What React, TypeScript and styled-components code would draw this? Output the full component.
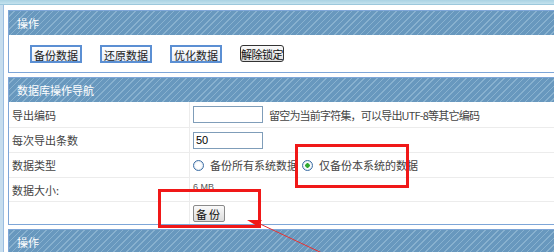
import * as React from 'react'
import styled, { createGlobalStyle } from 'styled-components'

const GlobalStyle = createGlobalStyle`
  html, body {
    margin: 0;
    padding: 0;
    background: #fff;
    overflow: hidden;
  }
  body {
    font-family: "Noto Sans CJK SC", "Liberation Sans", sans-serif;
    font-size: 11px;
    color: #333;
  }
`

const theme = {
  border: '#7ea6d8',
  headBase: '#6898be',
  headStripe: '#88b1cf',
  rowLine: '#ececec',
  red: '#f01818'
}

const Page = styled.div`
  position: relative;
  width: 554px;
  height: 252px;
  overflow: hidden;
`

const TopBand = styled.div`
  height: 4px;
  background: linear-gradient(#a9d2e3, #c4e2ee);
  border-bottom: 1px solid #9cc8dc;
`

const Body = styled.div`
  display: flex;
  gap: 4px;
`

const SideEdge = styled.div`
  flex-shrink: 0;
  width: 3px;
  height: 260px;
  background: #c6ddee;
  border-right: 1px solid #9bbde0;
`

const Content = styled.div`
  flex-shrink: 0;
  width: 560px;
  padding-top: 5px;
  display: flex;
  flex-direction: column;
  gap: 4px;
`

const Panel = styled.div`
  border: 1px solid ${theme.border};
  background: #fff;
`

const PanelHead = styled.div`
  height: 24px;
  line-height: 24px;
  padding-left: 8px;
  color: #fff;
  background: repeating-linear-gradient(
    135deg,
    ${theme.headBase} 0 3.5px,
    ${theme.headStripe} 3.5px 4.5px
  );
`

const ButtonBar = styled.div`
  height: 37px;
  display: flex;
  align-items: center;
  gap: 18px;
  padding-left: 21px;
`

const ActionButton = styled.button`
  width: 52px;
  height: 18px;
  padding: 0;
  font: inherit;
  color: #222;
  background: linear-gradient(#ffffff, #e4ecf7);
  border: 2px solid #5b8fd3;
  cursor: pointer;
`

const PlainButton = styled.button<{ $wide?: boolean }>`
  height: 17px;
  padding: 0 ${p => (p.$wide ? '0' : '2px')};
  font: inherit;
  color: #111;
  background: linear-gradient(#fafafa, #dcdcdc);
  border: 1px solid ${p => (p.$wide ? '#333' : '#8a8a8a')};
  border-radius: ${p => (p.$wide ? '3px' : '2px')};
  letter-spacing: ${p => (p.$wide ? '-0.5px' : '2px')};
  cursor: pointer;
`

const Row = styled.div<{ $h: number; $last?: boolean }>`
  display: grid;
  grid-template-columns: 180px 1fr;
  height: ${p => p.$h}px;
  border-bottom: ${p => (p.$last ? 'none' : `1px solid ${theme.rowLine}`)};
`

const Label = styled.div`
  display: flex;
  align-items: center;
  padding-left: 3px;
  color: #444;
`

const Value = styled.div`
  display: flex;
  align-items: center;
  gap: 4px;
  padding-left: 3px;
  border-left: 1px solid ${theme.rowLine};
`

const TextBox = styled.input`
  flex-shrink: 0;
  width: 70px;
  height: 17px;
  box-sizing: border-box;
  padding: 0 2px;
  margin-right: 2px;
  font: 11px "Liberation Sans", sans-serif;
  color: #000;
  border: 1px solid #7f9db9;
  outline: none;
`

const Hint = styled.span`
  color: #444;
  letter-spacing: -0.8px;
  white-space: nowrap;
`

const RadioItem = styled.label`
  display: flex;
  align-items: center;
  gap: 6px;
  color: #444;
  white-space: nowrap;
`

const RadioDot = styled.span<{ $on?: boolean }>`
  flex-shrink: 0;
  width: 9px;
  height: 9px;
  border-radius: 50%;
  border: 1px solid #3c6ea5;
  background: radial-gradient(
    circle,
    ${p => (p.$on ? '#2fa82f 0 2px, #fff 2.5px' : '#fff 0, #fff 100%')}
  );
  box-shadow: inset 0 0 2px #b9c9da;
`

const SizeText = styled.span`
  font: 9px "Liberation Sans", sans-serif;
  color: #555;
  margin-top: -5px;
`

const Overlay = styled.svg`
  position: absolute;
  left: 0;
  top: 0;
  pointer-events: none;
`

export default function App() {
  return (
    <Page>
      <GlobalStyle />
      <TopBand />
      <Body>
        <SideEdge />
        <Content>
          <Panel>
            <PanelHead>操作</PanelHead>
            <ButtonBar>
              {['备份数据', '还原数据', '优化数据'].map(t => (
                <ActionButton key={t}>{t}</ActionButton>
              ))}
              <PlainButton $wide>解除锁定</PlainButton>
            </ButtonBar>
          </Panel>

          <Panel>
            <PanelHead>数据库操作导航</PanelHead>
            <Row $h={25}>
              <Label>导出编码</Label>
              <Value>
                <TextBox defaultValue="" />
                <Hint>留空为当前字符集，可以导出UTF-8等其它编码</Hint>
              </Value>
            </Row>
            <Row $h={24}>
              <Label>每次导出条数</Label>
              <Value>
                <TextBox defaultValue="50" />
              </Value>
            </Row>
            <Row $h={24}>
              <Label>数据类型</Label>
              <Value>
                <RadioItem>
                  <RadioDot />
                  备份所有系统数据
                </RadioItem>
                <RadioItem>
                  <RadioDot $on />
                  仅备份本系统的数据
                </RadioItem>
              </Value>
            </Row>
            <Row $h={23}>
              <Label>数据大小:</Label>
              <Value>
                <SizeText>6 MB</SizeText>
              </Value>
            </Row>
            <Row $h={22} $last>
              <Label />
              <Value>
                <PlainButton>备份</PlainButton>
              </Value>
            </Row>
          </Panel>

          <Panel>
            <PanelHead>操作</PanelHead>
          </Panel>
        </Content>
      </Body>

      <Overlay width={554} height={252}>
        <rect x={296.5} y={145.5} width={111} height={41} fill="none" stroke={theme.red} strokeWidth={3} />
        <rect x={159.5} y={190.5} width={100} height={36} fill="none" stroke={theme.red} strokeWidth={3} />
        <line x1={258} y1={223} x2={322} y2={253} stroke="#e83030" strokeWidth={1} />
        <polygon points="247,220 262,220 257,226" fill={theme.red} />
      </Overlay>
    </Page>
  )
}
